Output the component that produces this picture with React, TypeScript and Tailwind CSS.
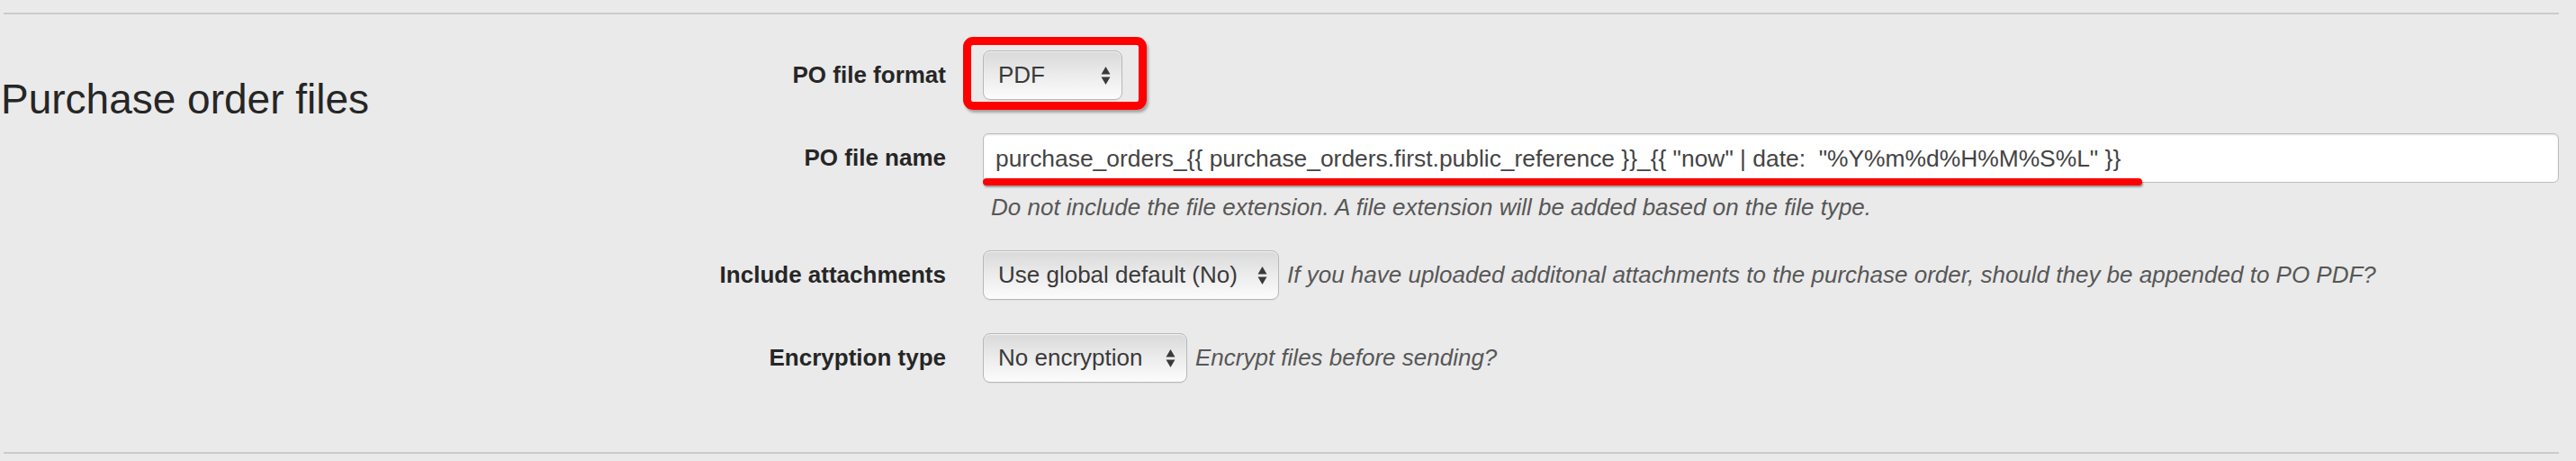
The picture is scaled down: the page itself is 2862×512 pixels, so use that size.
import type { ReactNode } from 'react';

const font = { fontFamily: '"Liberation Sans", Arial, Helvetica, sans-serif' };

const Arrows = () => (
  <svg width="11" height="22" viewBox="0 0 11 22" className="shrink-0">
    <path d="M5.5 1 L10.5 9.5 H0.5 Z" fill="#3a3a3a" />
    <path d="M0.5 12.5 H10.5 L5.5 21 Z" fill="#3a3a3a" />
  </svg>
);

const Select = ({ value, width }: { value: string; width: string }) => (
  <div
    className={`${width} h-[55px] shrink-0 flex items-center justify-between pl-[16px] pr-[12px] rounded-[8px] border border-[#b8b8b8] bg-gradient-to-b from-[#d9d9d9] via-[#ececec] to-[#fcfcfc] shadow-[inset_0_1px_1px_rgba(255,255,255,0.7),0_1px_1px_rgba(0,0,0,0.05)] text-[26px] leading-[55px] text-[#3a3a3a] whitespace-nowrap`}
  >
    <span>{value}</span>
    <Arrows />
  </div>
);

const Row = ({ label, children, className = '' }: { label: string; children: ReactNode; className?: string }) => (
  <div className={`flex items-start ${className}`}>
    <div className="w-[291px] shrink-0 text-right font-bold text-[26px] leading-[55px] text-[#262626] whitespace-nowrap">
      {label}
    </div>
    <div className="ml-[41px] flex-1 min-w-0">{children}</div>
  </div>
);

const Help = ({ children }: { children: ReactNode }) => (
  <span className="italic text-[26px] leading-[55px] text-[#575757] whitespace-nowrap">{children}</span>
);

export default function App() {
  return (
    <div className="w-[2862px] h-[512px] overflow-hidden bg-[#eaeaea] pl-[4px] pt-[14px]" style={font}>
      <div className="w-[2839px] h-[490px] border-y-2 border-[#cbcbcb] flex">
        {/* section title */}
        <div className="w-[756px] shrink-0 pt-[67px]">
          <h3 className="-ml-[3px] text-[46px] leading-[55px] text-[#262626] whitespace-nowrap">Purchase order files</h3>
        </div>

        {/* form */}
        <div className="flex-1 pt-[40px]">
          <Row label="PO file format">
            <div className="relative w-[155px]">
              <Select value="PDF" width="w-[155px]" />
              <div className="absolute -left-[22px] -top-[15px] w-[204px] h-[81px] border-[9px] border-[#ff0000] rounded-[11px] shadow-[2px_3px_3px_rgba(0,0,0,0.3)] pointer-events-none" />
            </div>
          </Row>

          <Row label="PO file name" className="mt-[37px]">
            <div className="relative">
              <div className="h-[55px] rounded-[6px] border border-[#bdbdbd] bg-white shadow-[inset_0_1px_2px_rgba(0,0,0,0.12)] pl-[13px] text-[26.4px] leading-[55px] text-[#444] whitespace-pre overflow-hidden">
                {'purchase_orders_{{ purchase_orders.first.public_reference }}_{{ "now" | date:  "%Y%m%d%H%M%S%L" }}'}
              </div>
              <div className="absolute left-0 top-[50px] w-[1288px] h-[8px] rounded-full bg-[#ff0000] shadow-[1px_2px_2px_rgba(0,0,0,0.35)]" />
            </div>
            <p className="mt-[9px] ml-[9px] italic text-[26px] leading-[36px] text-[#575757] whitespace-nowrap">
              Do not include the file extension. A file extension will be added based on the file type.
            </p>
          </Row>

          <Row label="Include attachments" className="mt-[30px]">
            <div className="flex items-start gap-[9px]">
              <Select value="Use global default (No)" width="w-[329px]" />
              <Help>If you have uploaded additonal attachments to the purchase order, should they be appended to PO PDF?</Help>
            </div>
          </Row>

          <Row label="Encryption type" className="mt-[37px]">
            <div className="flex items-start gap-[9px]">
              <Select value="No encryption" width="w-[227px]" />
              <Help>Encrypt files before sending?</Help>
            </div>
          </Row>
        </div>
      </div>
    </div>
  );
}
